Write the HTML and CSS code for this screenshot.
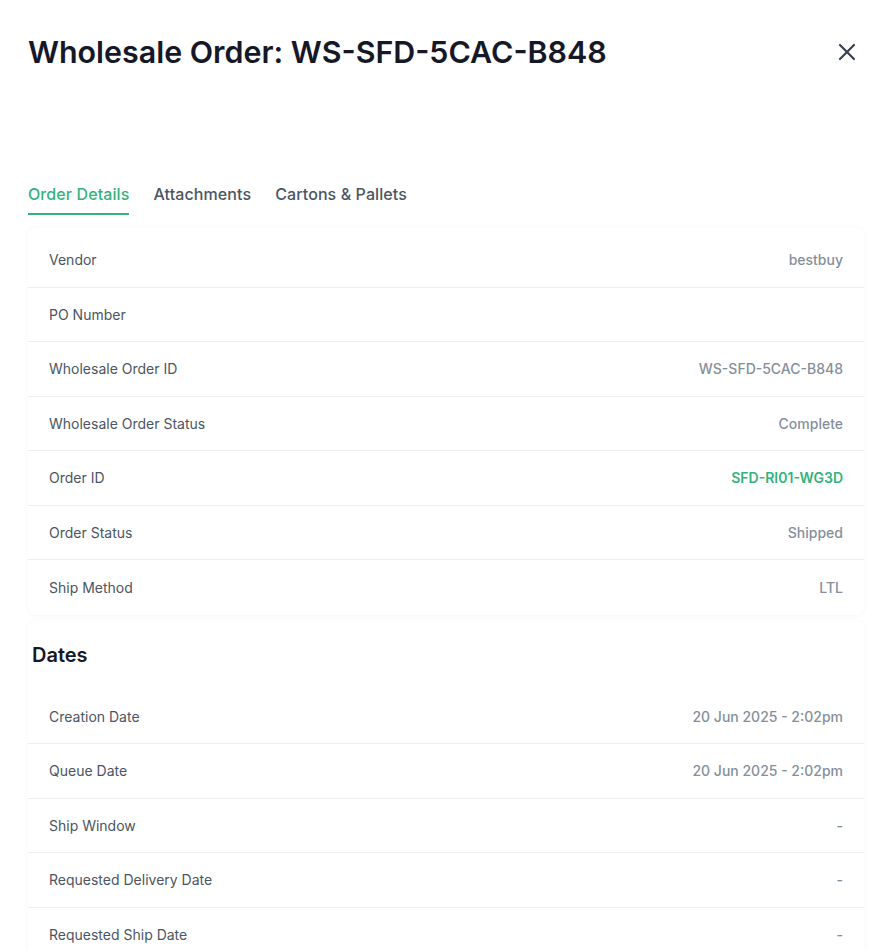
FILE: index.html
```html
<!DOCTYPE html>
<html>
<head>
<meta charset="utf-8">
<link rel="stylesheet" href="styles.css">
</head>
<body>
<div class="page">
  <header class="header">
    <h1 class="title">Wholesale Order: WS-SFD-5CAC-B848</h1>
    <button class="close" aria-label="Close">
      <svg width="20" height="20" viewBox="0 0 20 20" fill="none" stroke="#374151" stroke-width="2.2" stroke-linecap="round"><path d="M3 3L17 17M17 3L3 17"/></svg>
    </button>
  </header>
  <nav class="tabs">
    <span class="tab active">Order Details</span>
    <span class="tab">Attachments</span>
    <span class="tab">Cartons &amp; Pallets</span>
  </nav>
  <section class="card">
    <div class="row"><span class="label">Vendor</span><span class="value">bestbuy</span></div>
    <div class="row"><span class="label">PO Number</span><span class="value"></span></div>
    <div class="row"><span class="label">Wholesale Order ID</span><span class="value">WS-SFD-5CAC-B848</span></div>
    <div class="row"><span class="label">Wholesale Order Status</span><span class="value">Complete</span></div>
    <div class="row"><span class="label">Order ID</span><span class="value link">SFD-RI01-WG3D</span></div>
    <div class="row"><span class="label">Order Status</span><span class="value">Shipped</span></div>
    <div class="row"><span class="label">Ship Method</span><span class="value">LTL</span></div>
  </section>
  <section class="card">
    <h2 class="card-title">Dates</h2>
    <div class="row"><span class="label">Creation Date</span><span class="value">20 Jun 2025 - 2:02pm</span></div>
    <div class="row"><span class="label">Queue Date</span><span class="value">20 Jun 2025 - 2:02pm</span></div>
    <div class="row"><span class="label">Ship Window</span><span class="value">-</span></div>
    <div class="row"><span class="label">Requested Delivery Date</span><span class="value">-</span></div>
    <div class="row"><span class="label">Requested Ship Date</span><span class="value">-</span></div>
  </section>
</div>
</body>
</html>
```
FILE: styles.css
```css
* { box-sizing: border-box; }
html, body { margin: 0; background: #fff; }
body {
  font-family: Inter, "Noto Sans", sans-serif;
  color: #111827;
  height: 950px;
  overflow: hidden;
}
.page {
  padding: 0 28px;
}
.header {
  display: flex;
  align-items: center;
  justify-content: space-between;
  height: 104px;
}
.title {
  margin: 0;
  font-size: 30.4px;
  font-weight: 600;
  letter-spacing: 0;
  color: #161827;
}
.close {
  border: 0;
  background: none;
  padding: 0;
  margin-right: 7px;
  width: 20px;
  height: 20px;
  display: flex;
  cursor: pointer;
}
.tabs {
  display: flex;
  gap: 24px;
  margin-top: 76px;
  height: 38px;
}
.tab {
  font-size: 16px;
  font-weight: 500;
  letter-spacing: 0.1px;
  color: #4b5563;
  line-height: 20px;
  padding-top: 4px;
  height: 34px;
}
.tab.active {
  color: #34b37a;
  border-bottom: 2px solid #34b37a;
  height: 35px;
}
.card {
  margin-top: 10px;
  border-radius: 8px;
  box-shadow: 0 0 6px rgba(0, 0, 0, 0.035), 0 1px 3px rgba(0,0,0,0.02);
  padding-top: 5px;
}
.card + .card {
  margin-top: 6px;
  padding-top: 0;
}
.card-title {
  margin: 0;
  font-size: 20px;
  font-weight: 600;
  color: #161827;
  padding: 22px 4px 0;
  height: 69px;
}
.row {
  display: flex;
  align-items: center;
  justify-content: space-between;
  height: 54.5px;
  padding: 0 21px 0 21px;
  border-bottom: 1px solid #eceef1;
  font-size: 14px;
}
.row:last-child { border-bottom: 0; }
.label {
  color: #4b5563;
}
.value {
  color: #858f9b;
  font-weight: 500;
}
.value.link {
  color: #34b37a;
  font-weight: 600;
}
```
